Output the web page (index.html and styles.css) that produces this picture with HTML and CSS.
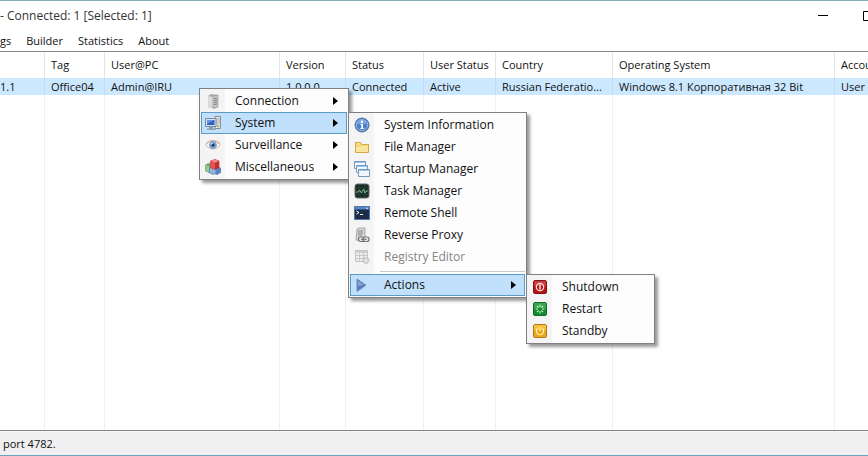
FILE: index.html
```html
<!DOCTYPE html>
<html lang="en">
<head>
<meta charset="utf-8">
<title>Connected: 1</title>
<link rel="stylesheet" href="styles.css">
</head>
<body>
<header class="titlebar">
  <h1 class="title">- Connected: 1 [Selected: 1]</h1>
  <div class="window-buttons">
    <button class="window-button" aria-label="Minimize"><svg width="12" height="12" viewBox="0 0 12 12"><path d="M1 5.500h10" stroke="#000" fill="none"/></svg></button>
    <button class="window-button" aria-label="Maximize"><svg width="12" height="12" viewBox="0 0 12 12"><path d="M.5 1.500h9v9h-9z" stroke="#000" fill="none"/></svg></button>
  </div>
</header>
<nav class="menubar">
  <button>gs</button>
  <button>Builder</button>
  <button>Statistics</button>
  <button>About</button>
</nav>
<main class="clients">
  <table>
    <colgroup>
      <col class="c-ip"><col class="c-tag"><col class="c-user"><col class="c-version"><col class="c-status"><col class="c-active"><col class="c-country"><col class="c-os"><col>
    </colgroup>
    <thead>
      <tr><th></th><th>Tag</th><th>User@PC</th><th>Version</th><th>Status</th><th>User Status</th><th>Country</th><th>Operating System</th><th>Accou</th></tr>
    </thead>
    <tbody>
      <tr class="selected"><td>1.1</td><td>Office04</td><td>Admin@IRU</td><td>1.0.0.0</td><td>Connected</td><td>Active</td><td>Russian Federatio...</td><td>Windows 8.1 Корпоративная 32 Bit</td><td>User</td></tr>
      <tr class="blank"><td></td><td></td><td></td><td></td><td></td><td></td><td></td><td></td><td></td></tr>
    </tbody>
  </table>
</main>
<footer class="statusbar">port 4782.</footer>

<ul class="menu context-menu">
  <li><button>
    <svg class="icon" viewBox="0 0 16 16"><path d="M3 3l3-2 7 1v12l-4 2-6-2z" fill="#a9aaab"/><path d="M3 3l6 1v12l-6-2z" fill="#d9dadb"/><path d="M8 3l5-1v12l-5 1z" fill="#c9cacb" stroke="#8b8d8f" stroke-width=".6"/><path d="M9 5.500l3-.5M9 7.500l3-.5M9 9.500l3-.5M9 11.500l3-.5" stroke="#66686a" stroke-width=".8"/></svg>
    <span>Connection</span><i class="arrow"></i></button></li>
  <li class="open"><button>
    <svg class="icon" viewBox="0 0 16 16"><path d="M10 1.500h5.500v12H10z" fill="#e3e4e2" stroke="#8b8f91"/><path d="M11 4h4M11 6h4M11 8h4" stroke="#a2a5a6" stroke-width=".8"/><path d="M.5 3.500h10.500v8H.5z" fill="#d5e1ef" stroke="#738ca8"/><path d="M2 5h7.500v5H2z" fill="#315fc2"/><path d="M2 5h7L2 9z" fill="#6a97df"/><path d="M4 12h4v1.500h2.500V15H2v-1.500h2z" fill="#8fa0ae"/><circle cx="13" cy="11" r="1" fill="#79b24c"/></svg>
    <span>System</span><i class="arrow"></i></button>
    <ul class="menu submenu system-menu">
      <li><button>
        <svg class="icon" viewBox="0 0 16 16"><circle cx="8" cy="8" r="7" fill="#4b7fcb" stroke="#52719c"/><circle cx="8" cy="8" r="5.700" fill="none" stroke="#9abce8" stroke-width=".9"/><path d="M3 7a5 5 0 0 1 10 0z" fill="#77a2df"/><circle cx="8" cy="4.700" r="1.200" fill="#fff"/><path d="M6.500 7H9v4h1v1H6.300v-1h1V8h-.8z" fill="#fff"/></svg>
        <span>System Information</span></button></li>
      <li><button>
        <svg class="icon" viewBox="0 0 16 16"><path d="M1.500 13.500v-10h5l1.500 2h6.500v8z" fill="#f5cf6b" stroke="#d3a849"/><path d="M2 7.500h5l1-1h6v6.500H2z" fill="#fbe49b"/><path d="M3 5h3" stroke="#fff0bd"/></svg>
        <span>File Manager</span></button></li>
      <li><button>
        <svg class="icon" viewBox="0 0 16 16"><g fill="#f1f7fd" stroke="#7598bf"><path d="M.5 .5h11v7H.5z"/><path d="M2.500 4.500h11v7h-11z"/><path d="M4.500 8.500h11v7h-11z"/></g><path d="M1 1.500h10M3 5.500h10M5 9.500h10" stroke="#9cc3ea"/></svg>
        <span>Startup Manager</span></button></li>
      <li><button>
        <svg class="icon" viewBox="0 0 16 16"><rect x="1" y="1" width="14" height="14" rx="2.500" fill="#182d26" stroke="#656c68"/><path d="M2 5h12M2 11h12M5 2v12M11 2v12" stroke="#36564a" stroke-width=".5"/><path d="M2 9h2.500l1-2 2 3 2-4 1.500 4 1-2h2" fill="none" stroke="#8ed2a2" stroke-width=".8"/></svg>
        <span>Task Manager</span></button></li>
      <li><button>
        <svg class="icon" viewBox="0 0 16 16"><path d="M.5 1.500h15v13H.5z" fill="#1d2d48" stroke="#56779f"/><path d="M1 2h14v2.500H1z" fill="#5485cb"/><path d="M2.500 6l2.500 1.500-2.500 1.500M6 9.500h3" fill="none" stroke="#fff"/><path d="M12 3.300h2" stroke="#d6e6fb"/></svg>
        <span>Remote Shell</span></button></li>
      <li><button>
        <svg class="icon" viewBox="0 0 16 16"><path d="M3 2l2-1h6v11l-2 2-7-1z" fill="#d4d5d6" stroke="#999b9d" stroke-width=".8"/><path d="M4 4h5M4 6h5M4 8h4" stroke="#85888a"/><g fill="#e8e8e8" stroke="#6e7275" stroke-width="1.200"><rect x="4.500" y="10" width="6" height="4.500" rx="2"/><rect x="9" y="10" width="6" height="4.500" rx="2"/></g><path d="M7 12.300h5.500" stroke="#6e7275" stroke-width="1.200"/></svg>
        <span>Reverse Proxy</span></button></li>
      <li><button disabled>
        <svg class="icon" viewBox="0 0 16 16"><path d="M1.500 1.500h12v11h-12z" fill="#eee" stroke="#c4c4c4"/><path d="M2 3h11" stroke="#cfcfcf" stroke-width="2"/><path d="M2 6.500h11M2 9.500h11M5.500 4v8M9.500 4v8" stroke="#c8c8c8"/><circle cx="12" cy="11.500" r="3" fill="#d5d5d5" stroke="#bababa" stroke-dasharray="1.500 .8"/><circle cx="12" cy="11.500" r="1" fill="#f2f2f2"/></svg>
        <span>Registry Editor</span></button></li>
      <li class="separator"></li>
      <li class="open"><button>
        <svg class="icon" viewBox="0 0 16 16"><path d="M3 2v12.500L12 8.200z" fill="#5479bd" stroke="#768ebc"/><path d="M4 4v5L10 8z" fill="#86a6d8"/></svg>
        <span>Actions</span><i class="arrow"></i></button>
        <ul class="menu submenu actions-menu">
          <li><button>
            <svg class="icon" viewBox="0 0 16 16"><rect x="1.500" y="1.500" width="13" height="13" rx="1.500" fill="#b8151b" stroke="#7b1518"/><path d="M2 2h12v5H2z" fill="#cf3a3c"/><circle cx="8" cy="8" r="3.700" fill="none" stroke="#ffe4e0" stroke-width="1.200"/><path d="M8 5.500v5" stroke="#fff" stroke-width="1.300"/></svg>
            <span>Shutdown</span></button></li>
          <li><button>
            <svg class="icon" viewBox="0 0 16 16"><rect x="1.500" y="1.500" width="13" height="13" rx="1.500" fill="#168a2e" stroke="#17662a"/><path d="M2 2h12v5H2z" fill="#38a548"/><path d="M8 3.500v2.500M8 10v2.500M3.500 8H6M10 8h2.500M5 5l1.500 1.500M9.500 9.500L11 11M11 5L9.500 6.500M6.500 9.500L5 11" stroke="#c9f5c7" stroke-width="1.100"/></svg>
            <span>Restart</span></button></li>
          <li><button>
            <svg class="icon" viewBox="0 0 16 16"><rect x="1.500" y="1.500" width="13" height="13" rx="1.500" fill="#eda719" stroke="#a97923"/><path d="M2 2h12v5H2z" fill="#f7c13b"/><path d="M5.500 5.500a3.600 3.600 0 1 0 5 0M8 4v4" fill="none" stroke="#fff3b8" stroke-width="1.200"/></svg>
            <span>Standby</span></button></li>
        </ul>
      </li>
    </ul>
  </li>
  <li><button>
    <svg class="icon" viewBox="0 0 16 16"><path d="M.5 8Q8 -1 15.500 8 8 16.500 .5 8z" fill="#f7f5f3" stroke="#d8b8ab"/><path d="M1 6.500Q8 .5 15 6.500" fill="none" stroke="#d0a797"/><circle cx="8" cy="8" r="3.500" fill="#6a9ad2" stroke="#8ba8cc"/><circle cx="8" cy="8" r="1.500" fill="#162e55"/><circle cx="7" cy="6.800" r=".8" fill="#fff"/></svg>
    <span>Surveillance</span><i class="arrow"></i></button></li>
  <li><button>
    <svg class="icon" viewBox="0 0 16 16"><path d="M.5 6l3-1.500L7 6v6l-3 1.500L.5 12z" fill="#6fa66c" stroke="#5d8b66" stroke-width=".7"/><path d="M.5 6L4 7v6.500L.5 12z" fill="#9ac891"/><path d="M8 9l4-1.500L15.500 9v4.500L12 15.500 8 14z" fill="#5b84c6" stroke="#4e6fa8" stroke-width=".7"/><path d="M4.500 9L8 8l3 1.500V14l-3 1.500L4.500 14z" fill="#90b4e1" stroke="#6480ac" stroke-width=".7"/><path d="M5.500 2L10 .5 14 2v6.500L10 10.500l-4.500-2z" fill="#c92f30" stroke="#ab3537" stroke-width=".7"/><path d="M5.500 2L10 .5 14 2l-4 1.700z" fill="#f08a83"/><path d="M5.500 2L10 3.700v6.800l-4.500-2z" fill="#e35451"/></svg>
    <span>Miscellaneous</span><i class="arrow"></i></button></li>
</ul>
</body>
</html>
```
FILE: styles.css
```css
* {
  box-sizing: border-box;
}

body {
  margin: 0;
  min-height: 100vh;
  display: flex;
  flex-direction: column;
  overflow: hidden;
  position: relative;
  border-top: 1px solid #84aebd;
  border-bottom: 1px solid #6aa7bf;
  background: #fff;
  color: #111;
  font: 11px/16px "Open Sans", "Noto Sans", sans-serif;
}

button {
  border: 0;
  padding: 0;
  background: none;
  color: inherit;
  font: inherit;
}

.titlebar {
  display: flex;
  align-items: center;
  justify-content: space-between;
  height: 29px;
}

.title {
  margin: 0;
  font-size: 12px;
  font-weight: 400;
  color: #333;
}

.window-buttons {
  display: flex;
  margin-right: -24px;
}

.window-button {
  display: flex;
  align-items: center;
  justify-content: center;
  width: 46px;
  height: 28px;
}

.menubar {
  display: flex;
  align-items: center;
  gap: 15px;
  height: 21px;
}

.clients {
  flex: 1;
  display: flex;
  border-top: 1px solid #888;
  border-bottom: 1px solid #82868a;
}

table {
  width: 100%;
  table-layout: fixed;
  border-collapse: separate;
  border-spacing: 0;
}

.c-ip { width: 45px; }
.c-tag { width: 60px; }
.c-user { width: 175px; }
.c-version { width: 66px; }
.c-status { width: 78px; }
.c-active { width: 72px; }
.c-country { width: 117px; }
.c-os { width: 222px; }

th,
td {
  padding: 0 0 0 6px;
  border-right: 1px solid #eef2f5;
  white-space: nowrap;
  text-align: left;
  font-weight: 400;
}

th:first-child,
td:first-child {
  padding-left: 0;
}

th {
  height: 26px;
  border-right-color: #e2e6e9;
}

.selected td {
  height: 17px;
  background: #cce8ff;
  border-right-color: #c3def4;
}

.blank td {
  height: auto;
}

tr > :last-child {
  border-right: 0;
}

.statusbar {
  height: 24px;
  padding: 4px 3px;
  background: #f0f0f0;
  border-top: 1px solid #f8f8f8;
}

.menu {
  position: absolute;
  margin: 0;
  padding: 1px;
  list-style: none;
  border: 1px solid #808080;
  background: linear-gradient(90deg, #f4f4f5 24px, #fdfdfd 26px);
  box-shadow: 3px 3px 3px rgba(0, 0, 0, 0.4);
  font-size: 12px;
}

.context-menu {
  left: 199px;
  top: 87px;
  width: 150px;
}

.submenu {
  left: calc(100% + 1px);
  top: 0;
}

.system-menu {
  width: 179px;
}

.actions-menu {
  width: 129px;
}

.menu li {
  position: relative;
}

.menu button {
  display: flex;
  align-items: center;
  width: 100%;
  height: 22px;
  padding: 0 8px 0 3px;
  border: 1px solid transparent;
  text-align: left;
}

.menu .open > button {
  border-color: #5b9bc4;
  background: #c1e0fb;
}

.menu button:disabled {
  color: #858585;
}

.icon {
  width: 16px;
  height: 16px;
  margin-right: 14px;
}

.arrow {
  margin-left: auto;
  border-left: 5px solid #000;
  border-top: 4px solid transparent;
  border-bottom: 4px solid transparent;
}

.menu .separator {
  height: 6px;
  margin-left: 30px;
  background: linear-gradient(#c9c9c9, #c9c9c9) 0 3px / 100% 1px no-repeat;
}
```
